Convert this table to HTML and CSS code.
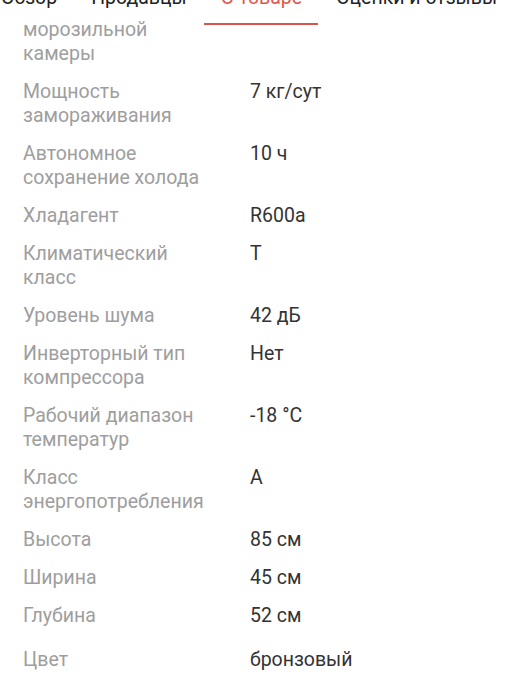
FILE: index.html
```html
<!DOCTYPE html>
<html lang="ru">
<head>
<meta charset="utf-8">
<link rel="stylesheet" href="styles.css">
</head>
<body>
<nav class="tabs">
  <span class="tab">Обзор</span>
  <span class="tab">Продавцы</span>
  <span class="tab tab-active">О товаре</span>
  <span class="tab">Оценки и отзывы</span>
</nav>
<div class="specs">
  <div class="row"><div class="label">морозильной камеры</div><div class="value"></div></div>
  <div class="row"><div class="label">Мощность замораживания</div><div class="value">7 кг/сут</div></div>
  <div class="row"><div class="label">Автономное сохранение холода</div><div class="value">10 ч</div></div>
  <div class="row"><div class="label">Хладагент</div><div class="value">R600a</div></div>
  <div class="row"><div class="label">Климатический класс</div><div class="value">T</div></div>
  <div class="row"><div class="label">Уровень шума</div><div class="value">42 дБ</div></div>
  <div class="row"><div class="label">Инверторный тип компрессора</div><div class="value">Нет</div></div>
  <div class="row"><div class="label">Рабочий диапазон температур</div><div class="value">-18 °C</div></div>
  <div class="row"><div class="label">Класс энергопотребления</div><div class="value">A</div></div>
  <div class="row"><div class="label">Высота</div><div class="value">85 см</div></div>
  <div class="row"><div class="label">Ширина</div><div class="value">45 см</div></div>
  <div class="row"><div class="label">Глубина</div><div class="value">52 см</div></div>
  <div class="row row-last"><div class="label">Цвет</div><div class="value">бронзовый</div></div>
</div>
</body>
</html>
```
FILE: styles.css
```css
html, body {
  margin: 0;
  padding: 0;
  background: #fff;
}
body {
  font-family: Roboto, "Noto Sans", sans-serif;
  font-size: 19.5px;
  width: 522px;
  overflow: hidden;
}
.tabs {
  display: flex;
  gap: 34px;
  height: 18px;
  margin-left: 1px;
  line-height: 24px;
  position: relative;
  z-index: 2;
}
.tab {
  display: block;
  margin-top: -14px;
  color: #222;
  white-space: nowrap;
  position: relative;
}
.tab-active {
  color: #e0584e;
}
.tab-active::after {
  content: "";
  position: absolute;
  left: -17px;
  right: -16px;
  top: 37px;
  height: 2px;
  background: #d9534f;
}
.specs {
  padding: 0 0 0 23px;
}
.row {
  display: grid;
  grid-template-columns: 227px 1fr;
  line-height: 24px;
  padding-bottom: 14px;
}
.label {
  color: #9e9e9e;
  max-width: 186px;
}
.value {
  color: #333;
}
.row-last {
  margin-top: 6px;
}
```
